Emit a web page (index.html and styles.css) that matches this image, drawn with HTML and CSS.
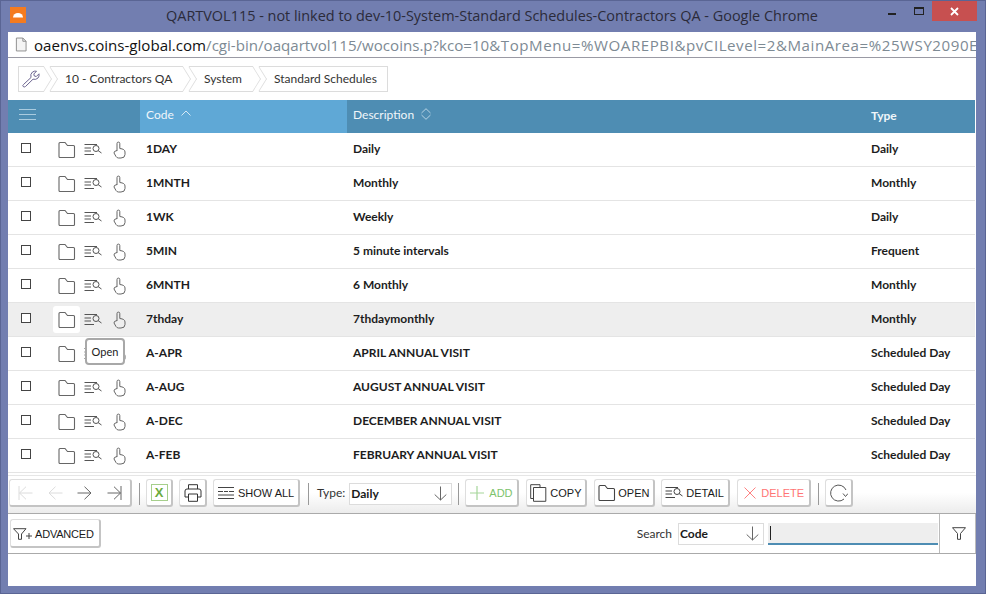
FILE: index.html
```html
<!DOCTYPE html>
<html>
    <head>
        <meta charset="utf-8">
        <title>QARTVOL115</title>
        <link rel="stylesheet" href="styles.css">
    </head>
    <body>
        <svg class="defs" width="0" height="0">
            <symbol id="i-folder" viewBox="0.500 0 18 17"><path d="M1.500 15.500V2.500q0-1 1-1h5l2.500 3h6q1 0 1 1v10q0 1-1 1h-13.500q-1 0-1-1z" fill="none" stroke="currentColor" stroke-width="1.100"/></symbol>
            <symbol id="i-detail" viewBox="0 0 18 13"><path d="M0.500 1.500H13M0.500 5H7M0.500 8H7M0.500 11.500H10" fill="none" stroke="currentColor"/><circle cx="12" cy="5.500" r="3" fill="none" stroke="currentColor"/><path d="M14.200 7.700L17.500 10" fill="none" stroke="currentColor"/></symbol>
            <symbol id="i-hand" viewBox="0 0 13 18"><path d="M4 10V2.500a1.400 1.400 0 0 1 2.800 0V7.500q5.200 .5 5.200 3.500v2.500q0 3.500-4 3.500H5.500q-1.500 0-2.500-1.500L1 12q-.5-1.800 3-2.500" fill="none" stroke="currentColor"/></symbol>
            <symbol id="i-filter" viewBox="0 0 14 13"><path d="M.5 .7H13.500L8.500 6.500V12.300H5.500V6.500z" fill="none" stroke="currentColor"/></symbol>
            <symbol id="i-down" viewBox="0 0 13 15"><path d="M6.500 .5V14M.7 8.500L6.500 14L12.300 8.500" fill="none" stroke="currentColor"/></symbol>
        </svg>

        <div class="window">
            <div class="titlebar">
                <div class="titlebar-left">
                    <span class="app-icon"><svg width="16" height="16" viewBox="0 0 16 16"><path d="M3 10.500a5 4.500 0 0 1 10 0z" fill="#fff"/></svg></span>
                </div>
                <div class="titlebar-text">QARTVOL115 - not linked to dev-10-System-Standard Schedules-Contractors QA - Google Chrome</div>
                <div class="titlebar-right">
                    <span class="win-min"></span>
                    <span class="win-max"></span>
                    <span class="win-close"><svg width="9" height="9" viewBox="0 0 9 9"><path d="M1 1L8 8M8 1L1 8" stroke="#fff" stroke-width="1.800"/></svg></span>
                </div>
            </div>

            <div class="addressbar">
                <svg class="page-icon" width="12" height="15" viewBox="0 0 13 15"><path d="M1.500 .5H8.500L12 4V14.500H1.500z" fill="#f4f4f4" stroke="#8a8a8a"/><path d="M8.500 .5V4H12" fill="none" stroke="#8a8a8a"/></svg>
                <span class="url"><b>oaenvs.coins-global.com</b>/cgi-bin/oaqartvol115/wocoins.p?kco=10<span class="url-tail">&amp;TopMenu=%WOAREPBI&amp;pvCILevel=2&amp;MainArea=%25WSY2090E</span></span>
            </div>

            <div class="page">
                <div class="crumbs">
                    <span class="crumb crumb-home"><svg width="20" height="20" viewBox="0 0 20 20"><path d="M2.500 15.500L10 8.500q-1-3.500 1.500-5.500q2-1.300 4-.8L12.800 5l.5 2 2 .5 2.700-2.700q.5 2.500-1 4.200q-2 2-5 1.200L4.500 17.500q-1.300 1-2.300 0t.3-2z" fill="none" stroke="#6c6490" stroke-width="1"/></svg></span>
                    <span class="crumb crumb-co">10 - Contractors QA</span>
                    <span class="crumb crumb-sys">System</span>
                    <span class="crumb crumb-last">Standard Schedules</span>
                </div>

                <table class="grid">
                    <thead>
                        <tr>
                            <th class="col-actions"><svg class="menu-icon" width="17" height="13" viewBox="0 0 17 13"><path d="M0 1.500H17M0 6.500H17M0 11.500H17" stroke="#a9cbdf" stroke-width="1"/></svg></th>
                            <th class="col-code sorted">Code <svg class="sort" width="10" height="6" viewBox="0 0 10 6"><path d="M.5 5.500L5 1L9.500 5.500" fill="none" stroke="#d5e8f4"/></svg></th>
                            <th class="col-desc">Description <svg class="sort-both" width="10" height="12" viewBox="0 0 10 12"><path d="M.5 5L5 .7L9.500 5M.5 7L5 11.300L9.500 7" fill="none" stroke="#b5d2e3"/></svg></th>
                            <th class="col-type">Type</th>
                        </tr>
                    </thead>
                    <tbody>
                        <tr>
                            <td><div class="acts"><span class="check"></span><span class="act"><svg width="18" height="17"><use href="#i-folder"/></svg></span><span class="act"><svg width="18" height="13"><use href="#i-detail"/></svg></span><span class="act"><svg width="13" height="18"><use href="#i-hand"/></svg></span></div></td>
                            <td>1DAY</td><td>Daily</td><td>Daily</td>
                        </tr>
                        <tr>
                            <td><div class="acts"><span class="check"></span><span class="act"><svg width="18" height="17"><use href="#i-folder"/></svg></span><span class="act"><svg width="18" height="13"><use href="#i-detail"/></svg></span><span class="act"><svg width="13" height="18"><use href="#i-hand"/></svg></span></div></td>
                            <td>1MNTH</td><td>Monthly</td><td>Monthly</td>
                        </tr>
                        <tr>
                            <td><div class="acts"><span class="check"></span><span class="act"><svg width="18" height="17"><use href="#i-folder"/></svg></span><span class="act"><svg width="18" height="13"><use href="#i-detail"/></svg></span><span class="act"><svg width="13" height="18"><use href="#i-hand"/></svg></span></div></td>
                            <td>1WK</td><td>Weekly</td><td>Daily</td>
                        </tr>
                        <tr>
                            <td><div class="acts"><span class="check"></span><span class="act"><svg width="18" height="17"><use href="#i-folder"/></svg></span><span class="act"><svg width="18" height="13"><use href="#i-detail"/></svg></span><span class="act"><svg width="13" height="18"><use href="#i-hand"/></svg></span></div></td>
                            <td>5MIN</td><td>5 minute intervals</td><td>Frequent</td>
                        </tr>
                        <tr>
                            <td><div class="acts"><span class="check"></span><span class="act"><svg width="18" height="17"><use href="#i-folder"/></svg></span><span class="act"><svg width="18" height="13"><use href="#i-detail"/></svg></span><span class="act"><svg width="13" height="18"><use href="#i-hand"/></svg></span></div></td>
                            <td>6MNTH</td><td>6 Monthly</td><td>Monthly</td>
                        </tr>
                        <tr class="hover">
                            <td><div class="acts"><span class="check"></span><span class="act act-on"><svg width="18" height="17"><use href="#i-folder"/></svg></span><span class="act"><svg width="18" height="13"><use href="#i-detail"/></svg></span><span class="act"><svg width="13" height="18"><use href="#i-hand"/></svg></span></div></td>
                            <td>7thday</td><td>7thdaymonthly</td><td>Monthly</td>
                        </tr>
                        <tr>
                            <td><div class="acts"><span class="check"></span><span class="act"><svg width="18" height="17"><use href="#i-folder"/></svg></span><span class="act"><svg width="18" height="13"><use href="#i-detail"/></svg></span><span class="act"><svg width="13" height="18"><use href="#i-hand"/></svg></span><span class="tooltip">Open</span></div></td>
                            <td>A-APR</td><td>APRIL ANNUAL VISIT</td><td>Scheduled Day</td>
                        </tr>
                        <tr>
                            <td><div class="acts"><span class="check"></span><span class="act"><svg width="18" height="17"><use href="#i-folder"/></svg></span><span class="act"><svg width="18" height="13"><use href="#i-detail"/></svg></span><span class="act"><svg width="13" height="18"><use href="#i-hand"/></svg></span></div></td>
                            <td>A-AUG</td><td>AUGUST ANNUAL VISIT</td><td>Scheduled Day</td>
                        </tr>
                        <tr>
                            <td><div class="acts"><span class="check"></span><span class="act"><svg width="18" height="17"><use href="#i-folder"/></svg></span><span class="act"><svg width="18" height="13"><use href="#i-detail"/></svg></span><span class="act"><svg width="13" height="18"><use href="#i-hand"/></svg></span></div></td>
                            <td>A-DEC</td><td>DECEMBER ANNUAL VISIT</td><td>Scheduled Day</td>
                        </tr>
                        <tr>
                            <td><div class="acts"><span class="check"></span><span class="act"><svg width="18" height="17"><use href="#i-folder"/></svg></span><span class="act"><svg width="18" height="13"><use href="#i-detail"/></svg></span><span class="act"><svg width="13" height="18"><use href="#i-hand"/></svg></span></div></td>
                            <td>A-FEB</td><td>FEBRUARY ANNUAL VISIT</td><td>Scheduled Day</td>
                        </tr>
                    </tbody>
                </table>

                <div class="toolbar">
                    <div class="btn pager">
                        <svg class="off" width="15" height="14" viewBox="0 0 15 14"><path d="M1 0V14M14.500 7H1.500M8 .7L1.500 7L8 13.300" fill="none" stroke="currentColor"/></svg>
                        <svg class="off" width="15" height="14" viewBox="0 0 15 14"><path d="M14.500 7H1M7.500 .7L1 7L7.500 13.300" fill="none" stroke="currentColor"/></svg>
                        <svg width="15" height="14" viewBox="0 0 15 14"><path d="M.5 7H14M7.500 .7L14 7L7.500 13.300" fill="none" stroke="currentColor"/></svg>
                        <svg width="15" height="14" viewBox="0 0 15 14"><path d="M14 0V14M.5 7H13.500M7 .7L13.500 7L7 13.300" fill="none" stroke="currentColor"/></svg>
                    </div>
                    <span class="sep sep-a"></span>
                    <div class="btn btn-icon btn-excel"><span class="excel">X</span></div>
                    <div class="btn btn-icon btn-print">
                        <svg width="18" height="18" viewBox="0 0 18 18"><path d="M4.500 5V.7H13.500V5M4.500 13H1V7q0-2 2-2H15q2 0 2 2V13H13.500M4.500 10H13.500V17.300H4.500z" fill="none" stroke="#333"/></svg>
                    </div>
                    <div class="btn btn-show">
                        <svg width="16" height="12" viewBox="0 0 16 12"><path d="M0 .5H16M0 11.500H16M0 8H16M0 4.500H5M11 4.500H16M6 4.500H10" fill="none" stroke="#444"/></svg>
                        SHOW ALL
                    </div>
                    <span class="sep sep-b"></span>
                    <span class="type-label">Type:</span>
                    <div class="select select-type">Daily<svg width="13" height="15"><use href="#i-down"/></svg></div>
                    <span class="sep sep-c"></span>
                    <div class="btn btn-add">
                        <svg width="14" height="14" viewBox="0 0 14 14"><path d="M7 0V14M0 7H14" stroke="#a6d69a" stroke-width="1.200"/></svg>
                        ADD
                    </div>
                    <div class="btn btn-copy">
                        <svg width="17" height="18" viewBox="0 0 17 18"><path d="M3.500 14.500H.7V.7H10V3.500M3.500 3.500H10L15.800 3.500V17.300H3.500z" fill="#fff" stroke="#444"/></svg>
                        COPY
                    </div>
                    <div class="btn btn-open">
                        <svg width="18" height="17"><use href="#i-folder"/></svg>
                        OPEN
                    </div>
                    <div class="btn btn-detail">
                        <svg width="18" height="13"><use href="#i-detail"/></svg>
                        DETAIL
                    </div>
                    <div class="btn btn-delete">
                        <svg width="12" height="12" viewBox="0 0 12 12"><path d="M.5 .5L11.500 11.500M11.500 .5L.5 11.500" stroke="#ff8080"/></svg>
                        DELETE
                    </div>
                    <span class="sep sep-d"></span>
                    <div class="btn btn-icon btn-refresh">
                        <svg width="18" height="18" viewBox="0 0 18 18"><path d="M14 15a8 8 0 1 1 2-9M13 9.500L15.500 12.500L18 9.500" fill="none" stroke="#555"/></svg>
                    </div>
                </div>

                <div class="searchbar">
                    <div class="btn btn-advanced">
                        <svg width="19" height="12" viewBox="0 0 19 12"><path d="M.5 .7H13L8.500 6V11.300H5.500V6z" fill="none" stroke="#444"/><path d="M13 8H19M16 5V11" stroke="#444"/></svg>
                        ADVANCED
                    </div>
                    <span class="search-label">Search</span>
                    <div class="select select-search">Code<svg width="13" height="15"><use href="#i-down"/></svg></div>
                    <div class="search-input"><span class="caret"></span></div>
                    <div class="search-filter"><svg width="14" height="13"><use href="#i-filter"/></svg></div>
                </div>
            </div>
        </div>
    </body>
</html>
```

FILE: styles.css
```css
html, body {
    margin: 0;
    padding: 0;
    background: #fff;
    overflow: hidden;
}

.defs {
    display: block;
    height: 0;
}

.window {
    box-sizing: border-box;
    width: 986px;
    height: 594px;
    display: flex;
    flex-direction: column;
    background: #727eb0;
    border: 1px solid #5a6594;
    padding: 0 9px 7px 7px;
    font-family: Lato, sans-serif;
}

/* title bar */

.titlebar {
    height: 31px;
    flex: none;
    display: grid;
    grid-template-columns: 1fr auto 1fr;
    align-items: start;
    margin-right: -9px;
}

.titlebar-left {
    padding: 6px 0 0 2px;
}

.app-icon {
    display: flex;
    align-items: center;
    justify-content: center;
    width: 16px;
    height: 16px;
    background: #f47b20;
}

.titlebar-text {
    font-family: "Open Sans", sans-serif;
    font-size: 14.450px;
    line-height: 20px;
    color: #2b2b3a;
    padding: 5px 9px 0 0;
    white-space: nowrap;
}

.titlebar-right {
    display: flex;
    justify-content: flex-end;
    align-items: flex-start;
}

.win-min {
    width: 8px;
    height: 2px;
    background: #222;
    margin: 12px 0 0 0;
}

.win-max {
    box-sizing: border-box;
    width: 10px;
    height: 8px;
    border: 1px solid #222;
    border-top-width: 2px;
    margin: 6px 8px 0 18px;
}

.win-close {
    width: 45px;
    height: 20px;
    background: #c75050;
    display: flex;
    align-items: center;
    justify-content: center;
    margin-right: 8px;
}

/* address bar */

.addressbar {
    height: 25px;
    flex: none;
    display: flex;
    align-items: center;
    background: #fff;
    border-bottom: 1px solid #9a9aa4;
    overflow: hidden;
    white-space: nowrap;
}

.page-icon {
    flex: none;
    margin: 0 7px 0 7px;
}

.url {
    font-family: "Open Sans", sans-serif;
    font-size: 15.100px;
    color: #7d8a94;
}

.url b {
    font-weight: normal;
    color: #111;
}

.url-tail {
    letter-spacing: .55px;
}

/* page */

.page {
    flex: 1;
    display: flex;
    flex-direction: column;
    background: #fff;
    min-height: 0;
}

.crumbs {
    height: 42px;
    flex: none;
    box-sizing: border-box;
    display: flex;
    align-items: center;
    padding: 0 0 0 10px;
    font-size: 12px;
    color: #333;
}

.crumb {
    box-sizing: border-box;
    height: 26px;
    line-height: 24px;
    border-top: 1px solid #dcdcdc;
    border-bottom: 1px solid #dcdcdc;
    padding: 0 0 0 15px;
    position: relative;
    margin-right: 6px;
}

/* the chevron on the end of each crumb, and the notch at its start */
.crumb::before,
.crumb::after {
    content: "";
    position: absolute;
    top: 3px;
    box-sizing: border-box;
    width: 18px;
    height: 18px;
    border-top: 1px solid #dcdcdc;
    border-right: 1px solid #dcdcdc;
    transform: scaleX(.62) rotate(45deg);
}

.crumb::before {
    left: -9px;
}

.crumb::after {
    right: -9px;
}

.crumb-home {
    width: 26px;
    border-left: 1px solid #dcdcdc;
    padding: 2px 0 0 2px;
    line-height: 0;
}

.crumb-home::before {
    display: none;
}

.crumb-co { width: 133px; }
.crumb-sys { width: 64px; }

.crumb-last {
    width: 129px;
    border-right: 1px solid #dcdcdc;
}

.crumb-last::after {
    display: none;
}

/* table */

.grid {
    width: 967px;
    flex: none;
    table-layout: fixed;
    border-collapse: separate;
    border-spacing: 0;
    font-size: 12px;
    color: #1d1d1d;
}

.grid th {
    box-sizing: border-box;
    height: 33px;
    padding: 0 0 4px 6px;
    background: #4e8db3;
    color: #f0f6fa;
    font-weight: normal;
    font-size: 12px;
    text-align: left;
}

.col-actions { width: 132px; }
.col-code { width: 207px; }
.col-desc { width: 518px; }

.grid th.sorted {
    background: #5fa8d6;
}

.grid th.col-type {
    padding-bottom: 2px;
    font-weight: 700;
}

.menu-icon {
    display: block;
    margin-left: 5px;
}

.sort {
    margin: 0 0 3px 4px;
}

.sort-both {
    margin: 0 0 0 4px;
    vertical-align: -1px;
}

.grid td {
    box-sizing: border-box;
    height: 34px;
    padding: 0 0 2px 6px;
    border-bottom: 1px solid #e4e4e4;
    font-weight: 700;
    white-space: nowrap;
}

.grid td:first-child {
    padding: 0;
}

.hover td {
    background: #eee;
}

.acts {
    display: flex;
    align-items: center;
    position: relative;
    height: 33px;
    padding-left: 13px;
}

.check {
    box-sizing: border-box;
    width: 10px;
    height: 10px;
    border: 1px solid #444;
    background: #fff;
    margin: -3px 22px 0 0;
}

.act {
    display: flex;
    align-items: center;
    justify-content: center;
    width: 30px;
    height: 27px;
    color: #666;
    border-radius: 3px;
}

.act:nth-child(2) {
    width: 27px;
}

.act:nth-child(3) {
    width: 26px;
    color: #555;
}

.act:nth-child(4) {
    width: 26px;
}

.act-on {
    background: #fff;
}

.tooltip {
    position: absolute;
    left: 77px;
    top: 1px;
    box-sizing: border-box;
    width: 40px;
    height: 27px;
    line-height: 23px;
    text-align: center;
    font-weight: normal;
    font-size: 11px;
    background: #fff;
    color: #222;
    border: 2px solid #a8a8a8;
    border-radius: 4px;
    z-index: 5;
}

/* toolbar */

.toolbar {
    box-sizing: border-box;
    height: 39px;
    flex: none;
    display: flex;
    align-items: center;
    margin-top: 2px;
    padding: 0 0 4px 1px;
    border-top: 1px solid #e6e6e6;
    border-bottom: 1px solid #aaa;
    background: linear-gradient(#fff 45%, #ececec);
}

.btn {
    box-sizing: border-box;
    height: 28px;
    flex: none;
    display: flex;
    align-items: center;
    padding-top: 1px;
    background: #fff;
    border: 1px solid #dedede;
    border-right: 2px solid #c4c4c4;
    border-bottom: 2px solid #c4c4c4;
    border-radius: 3px;
    font-family: "Liberation Sans", sans-serif;
    font-size: 11px;
    color: #1a1a1a;
    white-space: nowrap;
}

.pager {
    width: 123px;
    padding: 1px 8px 0;
    justify-content: space-between;
    color: #666;
}

.pager .off {
    color: #dcdcdc;
}

.sep {
    width: 1px;
    height: 22px;
    background: #999;
    flex: none;
}

.sep-a { margin: 2px 6px 0 7px; }
.sep-b { margin: 2px 8px 0 8px; }
.sep-c { margin: 2px 6px 0 6px; }
.sep-d { margin: 2px 6px 0 7px; }

.btn-icon {
    width: 28px;
    justify-content: center;
}

.btn-excel {
    width: 27px;
}

.btn-print {
    margin-left: 6px;
    margin-right: 6px;
}

.excel {
    box-sizing: border-box;
    width: 17px;
    height: 17px;
    border: 1px solid #a6cf8c;
    text-align: center;
    font: bold 13px/15px "Liberation Sans", sans-serif;
    color: #6cab3c;
}

.btn-show {
    width: 87px;
    padding-left: 4px;
    gap: 4px;
}

.type-label {
    font-size: 12px;
    color: #333;
    margin-right: 4px;
}

.select {
    box-sizing: border-box;
    height: 22px;
    flex: none;
    display: flex;
    align-items: center;
    justify-content: space-between;
    border: 1px solid #dcdcdc;
    padding: 0 4px 0 1px;
    font-weight: 700;
    font-size: 12px;
    color: #1a1a1a;
    background: #fff;
}

.select svg {
    color: #666;
}

.select-type {
    width: 103px;
    margin-top: 2px;
}

.btn-add {
    width: 54px;
    padding-left: 4px;
    gap: 5px;
    color: #7cc36c;
    margin-right: 7px;
}

.btn-copy {
    width: 61px;
    padding-left: 3px;
    gap: 3px;
    margin-right: 7px;
}

.btn-open {
    width: 61px;
    padding-left: 3px;
    gap: 2px;
    margin-right: 6px;
}

.btn-open svg {
    color: #444;
}

.btn-detail {
    width: 69px;
    padding-left: 3px;
    gap: 3px;
    margin-right: 7px;
}

.btn-detail svg {
    color: #444;
}

.btn-delete {
    width: 74px;
    padding-left: 6px;
    gap: 5px;
    color: #ff7474;
}

/* search row */

.searchbar {
    box-sizing: border-box;
    height: 40px;
    flex: none;
    display: flex;
    align-items: center;
    padding-left: 2px;
    border-bottom: 1px solid #aaa;
}

.btn-advanced {
    width: 91px;
    height: 29px;
    padding-left: 2px;
    gap: 3px;
    letter-spacing: -.2px;
    margin-right: auto;
}

.search-label {
    font-size: 12px;
    color: #333;
    margin-right: 6px;
}

.select-search {
    width: 86px;
    margin-right: 4px;
}

.search-input {
    box-sizing: border-box;
    width: 170px;
    height: 22px;
    background: #eee;
    border-bottom: 2px solid #4e8db3;
    padding: 3px 0 0 2px;
}

.caret {
    display: block;
    width: 1px;
    height: 14px;
    background: #222;
}

.search-filter {
    box-sizing: border-box;
    width: 37px;
    height: 39px;
    margin-left: 1px;
    padding-left: 2px;
    display: flex;
    align-items: center;
    justify-content: center;
    border-left: 1px solid #bbb;
    border-right: 1px solid #bbb;
    color: #444;
}
```
